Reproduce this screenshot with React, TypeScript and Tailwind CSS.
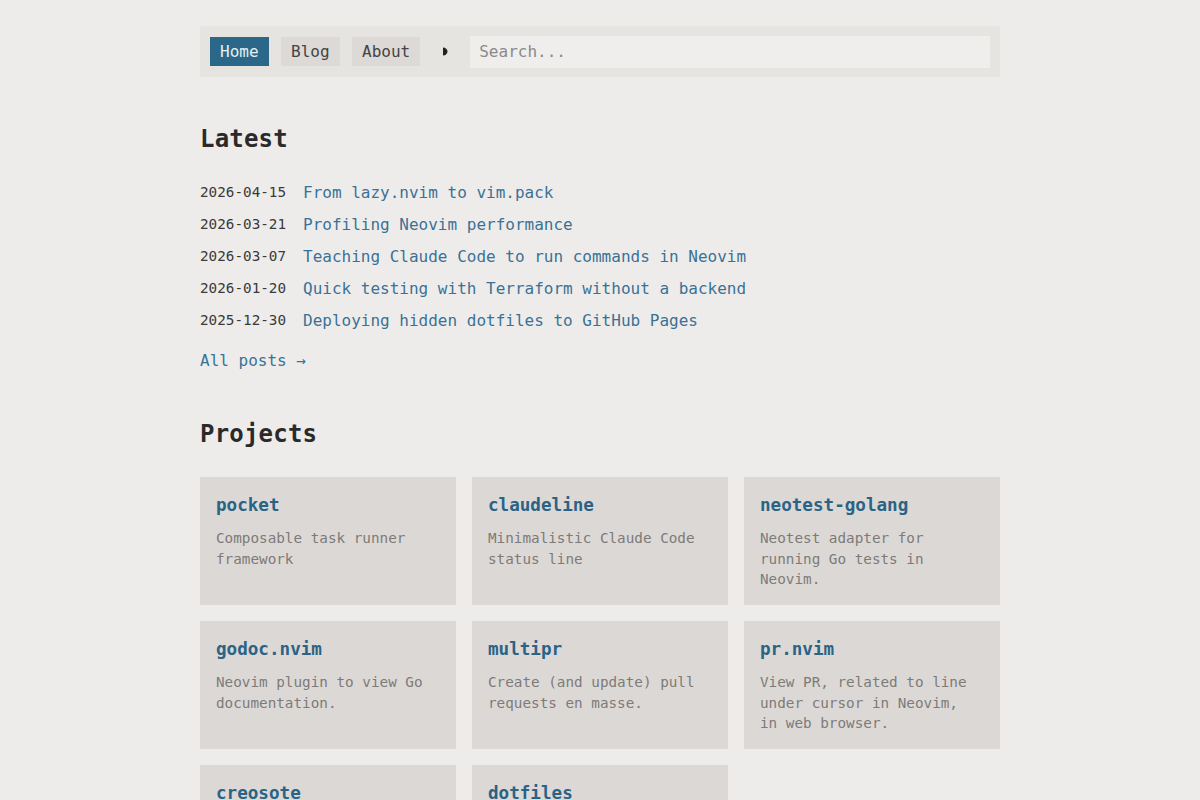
const posts = [
  { date: '2026-04-15', title: 'From lazy.nvim to vim.pack' },
  { date: '2026-03-21', title: 'Profiling Neovim performance' },
  { date: '2026-03-07', title: 'Teaching Claude Code to run commands in Neovim' },
  { date: '2026-01-20', title: 'Quick testing with Terraform without a backend' },
  { date: '2025-12-30', title: 'Deploying hidden dotfiles to GitHub Pages' },
];

const projects = [
  { name: 'pocket', desc: 'Composable task runner framework' },
  { name: 'claudeline', desc: 'Minimalistic Claude Code status line' },
  { name: 'neotest-golang', desc: 'Neotest adapter for running Go tests in Neovim.' },
  { name: 'godoc.nvim', desc: 'Neovim plugin to view Go documentation.' },
  { name: 'multipr', desc: 'Create (and update) pull requests en masse.' },
  { name: 'pr.nvim', desc: 'View PR, related to line under cursor in Neovim, in web browser.' },
  { name: 'creosote', desc: 'Identify unused dependencies and avoid a bloated virtual environment.' },
  { name: 'dotfiles', desc: 'My personal dotfiles for macOS and Linux.' },
];

function NavButton({ label, active }: { label: string; active?: boolean }) {
  return (
    <a
      href="#"
      className={
        active
          ? 'bg-[#2b6788] text-[#e6eff4] px-[10px] h-[29px] leading-[29px] text-[16px]'
          : 'bg-[#dcd9d6] text-[#444] px-[10px] h-[29px] leading-[29px] text-[16px]'
      }
    >
      {label}
    </a>
  );
}

export default function App() {
  return (
    <div className="min-h-[800px] bg-[#eeecea] font-['DejaVu_Sans_Mono',monospace] text-[#2e2e2e]">
      <div className="w-[800px] mx-auto pt-[26px] pb-10">
        <nav className="bg-[#e6e4e1] h-[51px] px-[10px] flex items-center">
          <div className="flex items-center gap-[12.5px]">
            <NavButton label="Home" active />
            <NavButton label="Blog" />
            <NavButton label="About" />
          </div>
          <button className="ml-[20px] w-[10px] h-[29px] flex items-center justify-center">
            <svg width="5" height="9" viewBox="0 0 5 9">
              <path d="M0 0.5 A4.5 4 0 0 1 0 8.5 Z" fill="#222" />
            </svg>
          </button>
          <input
            placeholder="Search..."
            className="ml-[20px] flex-1 h-[32px] bg-[#efeeec] px-[9px] text-[16px] text-[#333] placeholder:text-[#8a8a8a] outline-none"
          />
        </nav>

        <h2 className="mt-[46px] text-[24px] leading-[32px] font-bold text-[#2a2a2a] tracking-[0.2px]">Latest</h2>
        <ul className="mt-[22px]">
          {posts.map((p) => (
            <li key={p.date} className="flex items-center h-[32px]">
              <span className="text-[14.3px] text-[#3a3a3a] w-[103px] shrink-0">{p.date}</span>
              <a href="#" className="text-[16px] text-[#3a7296]">{p.title}</a>
            </li>
          ))}
        </ul>
        <a href="#" className="block mt-[12px] text-[16px] leading-[24px] text-[#3a7296]">All posts →</a>

        <h2 className="mt-[45px] text-[24px] leading-[32px] font-bold text-[#2a2a2a] tracking-[0.2px]">Projects</h2>
        <div className="mt-[27px] grid grid-cols-3 gap-[16px]">
          {projects.map((p) => (
            <a key={p.name} href="#" className="bg-[#dcd8d5] min-h-[128px] px-[16px] pt-[16px] pb-[14px] block">
              <div className="text-[17.6px] leading-[24px] font-bold text-[#2a6385]">{p.name}</div>
              <p className="mt-[11px] pr-[4px] text-[14.3px] leading-[20.5px] text-[#7d7b79]">{p.desc}</p>
            </a>
          ))}
        </div>
      </div>
    </div>
  );
}
